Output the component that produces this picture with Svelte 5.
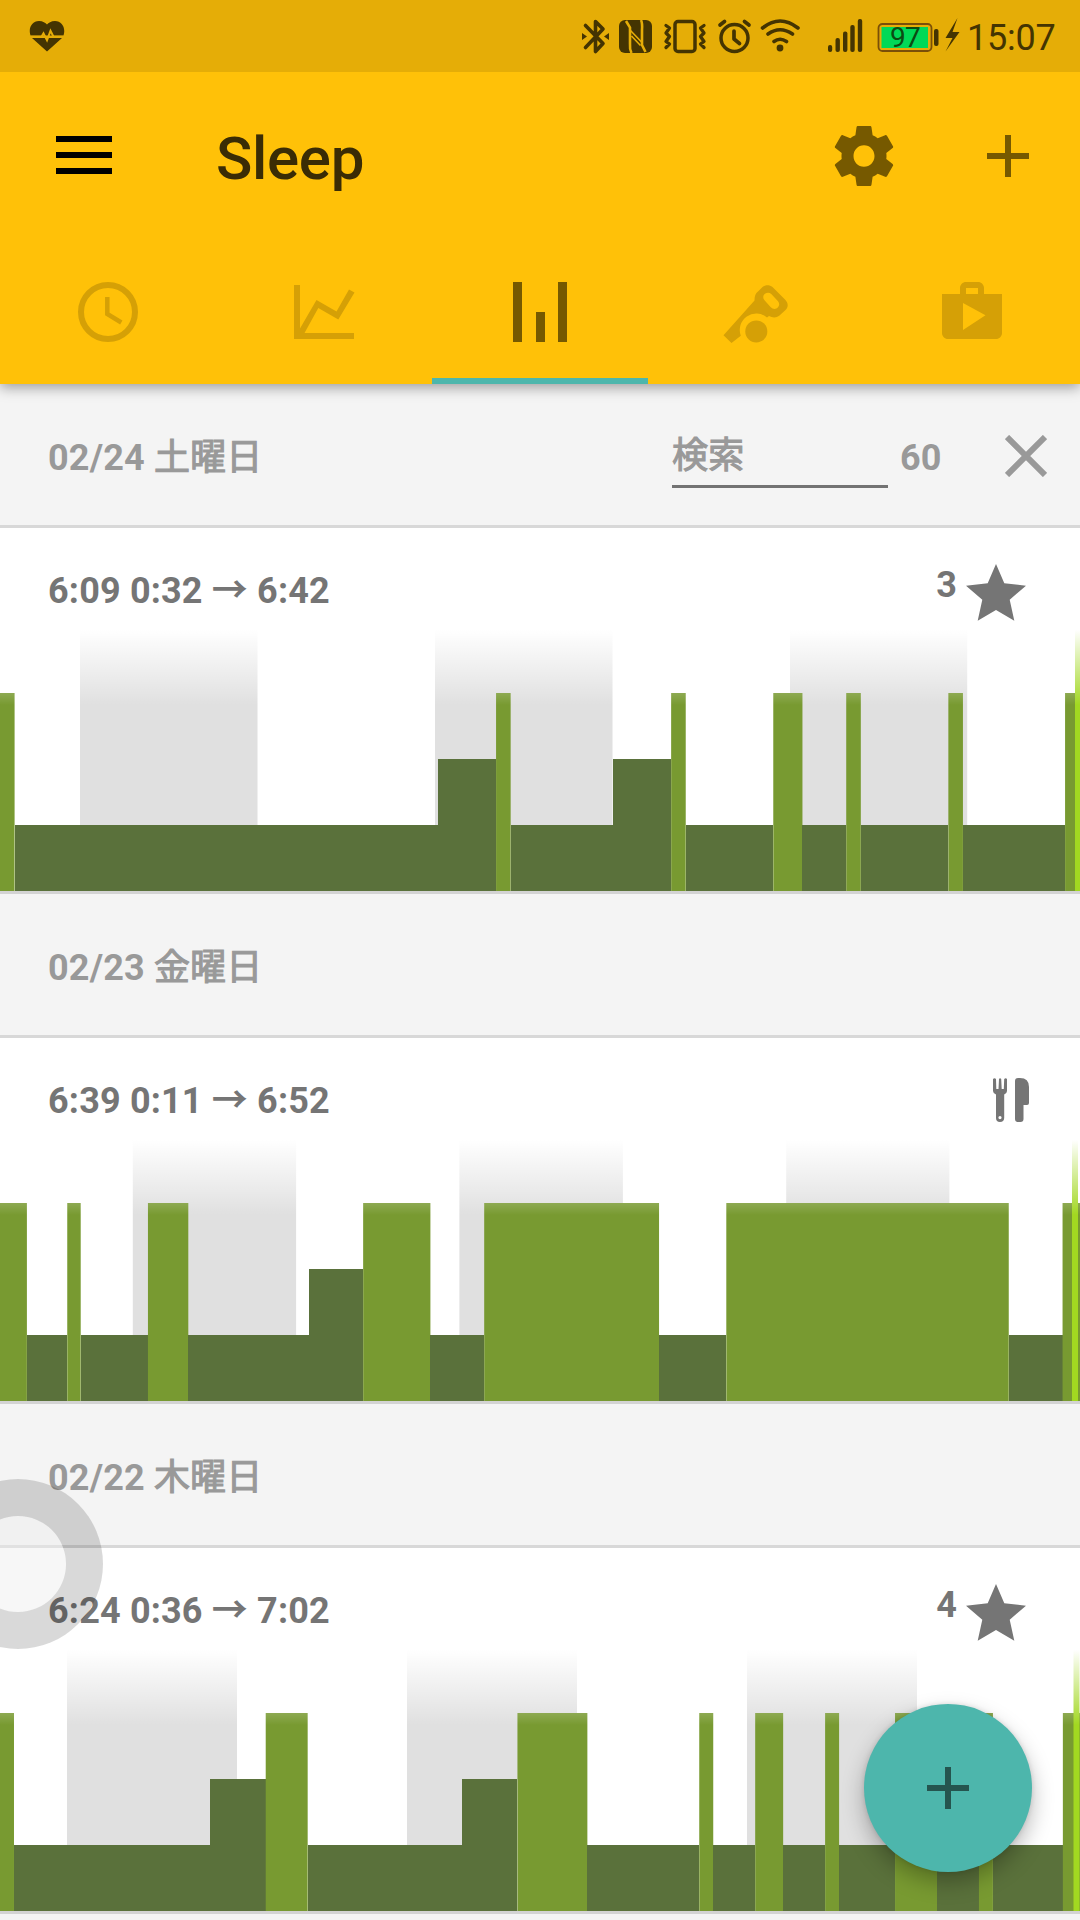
<script>
  // Bars are given as [level, start, end] in chart units; level 3 is light sleep, 2 and 1 are deeper.
  const nights = [
    {
      date: '02/24',
      weekday: '土曜日',
      search: true,
      total: '6:09',
      from: '0:32',
      to: '6:42',
      rating: 3,
      unit: 14.59,
      hours: [80, 257.5, 435, 612.5, 790, 967.2],
      marker: 1075,
      bars: [[3, 0, 1], [1, 1, 30], [2, 30, 34], [3, 34, 35], [1, 35, 42], [2, 42, 46], [3, 46, 47], [1, 47, 53], [3, 53, 55], [1, 55, 58], [3, 58, 59], [1, 59, 65], [3, 65, 66], [1, 66, 73], [3, 73, 75]]
    },
    {
      date: '02/23',
      weekday: '金曜日',
      total: '6:39',
      from: '0:11',
      to: '6:52',
      meal: true,
      unit: 13.45,
      hours: [132.8, 296.1, 459.4, 622.9, 786.2, 949.4],
      marker: 1072,
      bars: [[3, 0, 2], [1, 2, 5], [3, 5, 6], [1, 6, 11], [3, 11, 14], [1, 14, 23], [2, 23, 27], [3, 27, 32], [1, 32, 36], [3, 36, 49], [1, 49, 54], [3, 54, 75], [1, 75, 79], [3, 79, 81]]
    },
    {
      date: '02/22',
      weekday: '木曜日',
      total: '6:24',
      from: '0:36',
      to: '7:02',
      rating: 4,
      unit: 13.985,
      hours: [67, 237, 407, 577, 747, 917],
      marker: 1073.5,
      bars: [[3, 0, 1], [1, 1, 15], [2, 15, 19], [3, 19, 22], [1, 22, 33], [2, 33, 37], [3, 37, 42], [1, 42, 50], [3, 50, 51], [1, 51, 54], [3, 54, 56], [1, 56, 59], [3, 59, 60], [1, 60, 64], [3, 64, 67], [1, 67, 70], [3, 70, 71], [1, 71, 76], [3, 76, 78]]
    }
  ];
  const pairs = (h) => [[h[0], h[1]], [h[2], h[3]], [h[4], h[5]]];
</script>

<div class="screen">
  <header class="top">
    <div class="status">
      <svg class="heart" width="36" height="32" viewBox="0 0 36 32">
        <path d="M18 31.500L3 18H33ZM1.500 15.500C-1 8 3 1 10 1c4 0 6.500 2 8 3.500C19.500 3 22 1 26 1c7 0 11 7 8.500 14.500Z" />
        <path class="pulse" d="M0 16.800h12.500l2-3.500 3.500 7 3.500-9.500 3 6H36" />
      </svg>
      <svg class="sysicons" width="391" height="72" viewBox="576 0 391 72">
        <path class="ln" stroke-width="3.600" d="M585.500 25.500L603 43.500 595.500 51.500V21.500L603 29 585.500 47.500" />
        <path d="M582 33l5 3.500-5 3.500zM609 33l-5 3.500 5 3.500z" />
        <rect x="619" y="20" width="33" height="33" rx="6" />
        <path class="cut" d="M626 21L630 27.500V44Q629.500 49 631.500 53M641 20Q642.500 23 642 30V45L645.500 52" />
        <path class="cut thin" d="M630 30L641.500 42M631.500 36L640.500 45.500" />
        <rect class="ln" x="675" y="21.500" width="20" height="30" rx="3" stroke-width="3.500" />
        <path class="ln" stroke-width="3.300" d="M666 25.500l3.500 2.500-3.500 5 3.500 3.500-3.500 5 3.500 2.500-3.500 3.500M704 25.500l-3.500 2.500 3.500 5-3.500 3.500 3.500 5-3.500 2.500 3.500 3.500" />
        <circle class="ln" cx="734.500" cy="38" r="13.500" stroke-width="3.500" />
        <path class="ln" stroke-width="3.700" d="M734 31v8l5.500 4.500M720 25l4.500-3.500M749 25l-4.500-3.500" />
        <path class="ln" stroke-width="3.600" d="M762.500 28Q780 14 798 28M768 34Q780 25.500 792.500 34M774 41.500Q780 37 786.500 41.500" />
        <circle cx="780" cy="48" r="3.400" />
        <rect x="828" y="45" width="4.200" height="7" rx="2" />
        <rect x="835.500" y="38" width="4.400" height="14" rx="2" />
        <rect x="843" y="31.500" width="4.400" height="20.500" rx="2" />
        <rect x="850.300" y="25" width="4.400" height="27" rx="2" />
        <rect x="857.800" y="19" width="4.400" height="33" rx="2" />
        <rect class="ln cell" x="878.500" y="24" width="53" height="27" rx="4" stroke-width="1.800" />
        <rect class="charge" x="881.500" y="27" width="46.500" height="21" />
        <text x="905" y="47" text-anchor="middle">97</text>
        <rect x="934" y="29" width="4.500" height="17" rx="2" />
        <path d="M957.500 18L945.500 38h7L945.500 51.500 959.500 32h-7Z" />
      </svg>
      <span class="time">15:07</span>
    </div>
    <div class="bar">
      <div class="menu"><i></i><i></i><i></i></div>
      <h1>Sleep</h1>
      <svg class="action" width="72" height="72" viewBox="0 0 24 24">
        <path d="M19.430 12.980c.040-.320.070-.640.070-.980s-.030-.660-.070-.980l2.110-1.650c.190-.150.240-.420.120-.640l-2-3.460c-.120-.220-.390-.300-.610-.220l-2.490 1c-.520-.400-1.080-.730-1.690-.980l-.380-2.650C14.460 2.180 14.250 2 14 2h-4c-.250 0-.460.180-.490.420l-.380 2.650c-.610.250-1.170.590-1.690.980l-2.490-1c-.230-.090-.490 0-.610.220l-2 3.460c-.130.220-.070.490.120.640l2.110 1.650c-.040.320-.070.650-.070.980s.030.660.070.980l-2.110 1.650c-.190.150-.240.420-.120.640l2 3.460c.120.220.390.300.610.220l2.490-1c.520.400 1.080.730 1.690.980l.380 2.650c.030.240.240.420.490.420h4c.250 0 .460-.180.490-.420l.380-2.650c.610-.250 1.170-.590 1.690-.980l2.490 1c.230.090.490 0 .610-.220l2-3.460c.120-.220.070-.490-.120-.640l-2.110-1.650zM12 15.600c-1.980 0-3.500-1.620-3.500-3.600s1.520-3.600 3.500-3.600 3.500 1.620 3.500 3.600-1.520 3.600-3.500 3.600z" />
      </svg>
      <svg class="action" width="72" height="72" viewBox="0 0 72 72"><path d="M33 15h6v18h18v6H39v18h-6V39H15v-6h18z" /></svg>
    </div>
    <nav>
      <div class="tab">
        <svg width="72" height="72" viewBox="0 0 72 72">
          <circle cx="36" cy="36" r="27" fill="none" stroke="currentColor" stroke-width="6" />
          <path d="M35.300 21v17l14 8.500" fill="none" stroke="currentColor" stroke-width="4.500" />
        </svg>
      </div>
      <div class="tab">
        <svg width="72" height="72" viewBox="0 0 72 72">
          <path d="M6 9h6v43.500L28.500 24l20 11.500L61 13.500l5.500 3L50.300 43.500 30.300 32 16.500 57H66v6H6z" />
        </svg>
      </div>
      <div class="tab active">
        <svg width="72" height="72" viewBox="0 0 72 72"><path d="M9 6h9v60H9zM32 36h9v30h-9zM54 6h9v60h-9z" /></svg>
      </div>
      <div class="tab">
        <svg width="72" height="72" viewBox="720 276 72 72">
          <path fill-rule="evenodd" d="M754.500 300.500C754.500 296 755.500 293.500 758 291.500L762.500 287C765.500 284.500 769.500 284.500 772.500 287L785 299.500C788.500 303 788.500 307 785.500 310L779.500 315.500C776.500 318 772.500 318 769 316L767 317.500A16.500 16.500 0 0 0 740.800 335.800L731.500 343 723.500 335.300ZM765 293.700C762.500 295.500 763 298.500 764.500 300.200L770.500 307C773 309.500 776 309.500 778 307.300C779.700 305.300 779.500 303 778 301.200L771.300 294C769.500 292.300 767 292.200 765 293.700Z" />
          <circle cx="756.300" cy="331.400" r="11" />
        </svg>
      </div>
      <div class="tab">
        <svg width="72" height="72" viewBox="0 0 24 24">
          <path d="M16 6V4c0-1.110-.890-2-2-2h-4c-1.110 0-2 .890-2 2v2H2v13c0 1.110.890 2 2 2h16c1.110 0 2-.890 2-2V6h-6zm-6-2h4v2h-4V4zM9 18V9l7.500 4.100L9 18z" />
        </svg>
      </div>
    </nav>
  </header>

  <main>
    {#each nights as night}
      <section>
        <div class="day">
          <span>{night.date} <b class="cjk">{night.weekday}</b></span>
          {#if night.search}
            <div class="search cjk">検索</div>
            <span class="count">60</span>
            <svg class="close" width="42" height="42" viewBox="0 0 42 42"><path d="M2 2L40 40M40 2L2 40" /></svg>
          {/if}
        </div>
        <div class="card">
          <div class="summary">
            <span>{night.total} {night.from} → {night.to}</span>
            {#if night.rating}
              <span class="rating">{night.rating}</span>
              <svg class="star" width="60" height="57" viewBox="966 564 60 57">
                <path d="M996 564L1004.300 583.300 1026 585.700 1009.700 599.700 1014.300 620.700 996 610 977.700 620.700 982.300 599.700 966 585.700 987.700 583.300Z" />
              </svg>
            {/if}
            {#if night.meal}
              <svg class="meal" width="36" height="44" viewBox="0 0 36 44">
                <path fill-rule="evenodd" d="M0 1Q1.500-.5 3 1L3.300 11H5.500L6 1Q7-.5 8.200 1L8.700 11H10.800L11.200 1Q12.800-.5 14 1V13Q14 15 11.200 16.500V40Q11 44 7 44T3 40V16.500Q0 15 0 13ZM7 38A1.600 1.600 0 1 0 7 41.200 1.600 1.600 0 1 0 7 38Z" />
                <path d="M22 3Q22 0 25 0H27Q36 0 36 9V25Q36 27 34 27H30.500V41Q30.500 44 27.500 44H25Q22 44 22 41Z" />
              </svg>
            {/if}
          </div>
          <svg class="chart" width="1080" height="261" viewBox="0 0 1080 261">
            <defs>
              <linearGradient id="fade" x1="0" y1="0" x2="0" y2="1">
                <stop offset="0" stop-color="#fff" />
                <stop offset="1" stop-color="#fff" stop-opacity="0" />
              </linearGradient>
            </defs>
            {#each pairs(night.hours) as [a, b]}
              <rect class="hour" x={a} y="0" width={b - a} height="261" />
            {/each}
            {#each night.bars as [level, a, b]}
              <rect class={level === 3 ? 'light' : 'deep'} x={a * night.unit} y={261 - level * 66} width={(b - a) * night.unit} height={level * 66} />
            {/each}
            <rect class="marker" x={night.marker} y="0" width="6" height="261" />
            <rect x="0" y="0" width="1080" height="75" fill="url(#fade)" />
          </svg>
        </div>
      </section>
    {/each}
    <div class="day"></div>
  </main>

  <div class="touch"></div>
  <button class="fab" aria-label="add">
    <svg width="42" height="42" viewBox="0 0 42 42"><path d="M18 0h6v18h18v6H24v18h-6V24H0v-6h18z" /></svg>
  </button>
</div>

<style>
  .screen {
    position: relative;
    width: 1080px;
    height: 1920px;
    overflow: hidden;
    background: #fff;
    font-family: Roboto, 'Noto Sans CJK JP', sans-serif;
  }
  svg { display: block; flex: none; fill: currentColor; }
  .top {
    position: relative;
    z-index: 1;
    height: 384px;
    background: #ffc108;
    box-shadow: 0 4px 12px rgba(0, 0, 0, 0.34);
  }
  .status {
    display: flex;
    align-items: center;
    height: 72px;
    padding-left: 29px;
    background: #e5ad07;
    color: #443402;
  }
  .pulse { fill: none; stroke: #e5ad07; stroke-width: 2; }
  .sysicons { margin-left: 511px; }
  .ln { fill: none; stroke: #443402; stroke-linecap: round; stroke-linejoin: round; }
  .cell { stroke: #7a4f08; }
  .cut { fill: none; stroke: #e5ad07; stroke-width: 2.600; }
  .thin { stroke-width: 1.600; }
  .charge { fill: #00d957; }
  .sysicons text { font-size: 28px; letter-spacing: -0.8px; fill: #0b4a12; }
  .time { font-size: 36px; line-height: 42px; padding-top: 3px; letter-spacing: -0.25px; }
  .bar {
    display: flex;
    align-items: center;
    height: 168px;
    padding: 0 36px 0 56px;
  }
  .menu { display: grid; gap: 10px; width: 56px; margin-top: -2px; }
  .menu i { height: 6px; background: #000; }
  h1 {
    flex: 1;
    margin: 5px 0 0 104px;
    font-size: 60px;
    line-height: 70px;
    font-weight: 500;
    letter-spacing: -0.3px;
    color: #3a2c05;
  }
  .action { color: #765900; }
  .action + .action { margin-left: 72px; }
  nav { display: grid; grid-template-columns: repeat(5, 1fr); height: 144px; }
  .tab {
    display: flex;
    justify-content: center;
    padding-top: 36px;
    color: #d5a006;
    border-bottom: 6px solid transparent;
    box-sizing: border-box;
  }
  .active { color: #765900; border-color: #4db6ac; }
  .day {
    display: flex;
    align-items: center;
    box-sizing: border-box;
    height: 144px;
    padding: 7px 33px 0 48px;
    background: #f4f4f4;
    border-bottom: 3px solid #d8d8d8;
    color: #999;
    font-size: 36px;
    line-height: 42px;
    font-weight: 700;
    letter-spacing: 0.17px;
  }
  .cjk { font-weight: 400; -webkit-text-stroke: 1.1px currentColor; }
  .search {
    width: 216px;
    height: 54px;
    margin: 6px 12px 0 auto;
    padding-top: 1px;
    box-sizing: border-box;
    border-bottom: 3px solid #737373;
  }
  .count { width: 105px; }
  .close { margin-top: -5px; fill: none; stroke: currentColor; stroke-width: 6; }
  .card { border-bottom: 3px solid #d3d3d3; color: #757575; }
  .summary {
    display: flex;
    align-items: flex-start;
    box-sizing: border-box;
    height: 102px;
    padding: 42px 54px 0 48px;
    font-size: 36px;
    line-height: 42px;
    font-weight: 700;
    letter-spacing: 0.17px;
  }
  .rating { margin: -6px 9px 0 auto; }
  .star { margin-top: -6px; }
  .meal { margin: -2px -3px 0 auto; }
  .hour { fill: #e0e0e0; }
  .light { fill: #789a31; }
  .deep { fill: #5a713b; shape-rendering: crispEdges; }
  .marker { fill: #a2d821; }
  .touch {
    position: absolute;
    left: -67px;
    top: 1479px;
    box-sizing: border-box;
    width: 170px;
    height: 170px;
    border: 37px solid rgba(0, 0, 0, 0.15);
    border-radius: 50%;
    background: rgba(237, 237, 237, 0.45) padding-box;
  }
  .fab {
    position: absolute;
    left: 864px;
    top: 1704px;
    display: grid;
    place-items: center;
    width: 168px;
    height: 168px;
    padding: 0;
    border: 0;
    border-radius: 50%;
    background: #4db6ac;
    color: #25554f;
    box-shadow: 0 10px 22px rgba(0, 0, 0, 0.28), 0 0 5px rgba(0, 0, 0, 0.12);
  }
</style>
